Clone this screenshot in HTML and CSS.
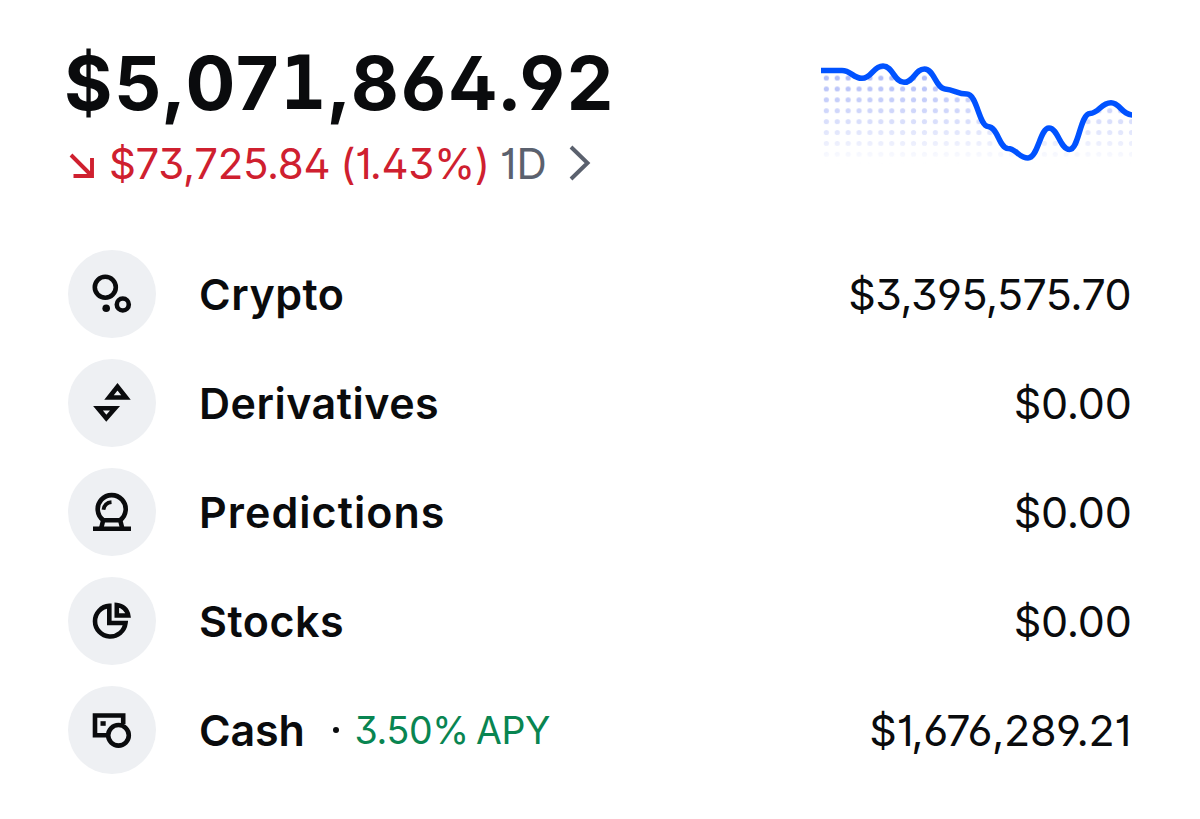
FILE: index.html
```html
<!DOCTYPE html>
<html lang="en">
<head>
<meta charset="utf-8">
<title>Portfolio</title>
<link rel="stylesheet" href="styles.css">
</head>
<body>
<main class="portfolio">
  <header class="summary">
    <div class="totals">
      <div class="balance"><span>$5,07</span><span class="serif-one">1</span><span>,864.92</span></div>
      <div class="change">
        <svg class="arrow" width="26" height="26" viewBox="0 0 26 26"><path d="M2 2L22 22M4.5 23H23V5" /></svg>
        <span class="loss">$73,725.84 (1.43%)</span>
        <span class="period">1D</span>
        <svg class="chevron" width="22" height="36" viewBox="0 0 22 36"><path d="M2 2L18.5 18L2 34" /></svg>
      </div>
    </div>
    <svg class="chart" width="311" height="110" viewBox="821 55 311 110">
      <defs>
        <pattern id="dots" x="820.9" y="72.6" width="10.9" height="10.9" patternUnits="userSpaceOnUse"><circle cx="5.45" cy="5.45" r="2.6" /></pattern>
        <linearGradient id="fade" x1="0" y1="80" x2="0" y2="164" gradientUnits="userSpaceOnUse"><stop offset="0" stop-color="#fff" /><stop offset="1" stop-color="#fff" stop-opacity="0" /></linearGradient>
        <mask id="fademask"><rect x="821" y="55" width="311" height="110" fill="url(#fade)" /></mask>
      </defs>
      <g mask="url(#fademask)"><path class="area" d="M821 70.5H842C851 70.5 853 78.3 862 78.3C872 78.3 873 66 883 66C893 66 894 82.3 904 82.3C914 82.3 915 69 924.500 69C934 69 936 88.500 945 89C955 90 957 94 967 94C977 94 979 126 988 126.500C998 127 999 148 1008 148.500C1016 148.500 1019 158 1028 158C1038 158 1040 128 1049 128C1058 128 1060 149.500 1069.500 149.500C1079 149.500 1080 114 1090 113.500C1099 113 1101 102.800 1111 102.800C1120 102.800 1122 115 1132 115V165H821Z" /></g>
      <path class="line" d="M820 70.5H842C851 70.5 853 78.3 862 78.3C872 78.3 873 66 883 66C893 66 894 82.3 904 82.3C914 82.3 915 69 924.500 69C934 69 936 88.500 945 89C955 90 957 94 967 94C977 94 979 126 988 126.500C998 127 999 148 1008 148.500C1016 148.500 1019 158 1028 158C1038 158 1040 128 1049 128C1058 128 1060 149.500 1069.500 149.500C1079 149.500 1080 114 1090 113.500C1099 113 1101 102.800 1111 102.800C1120 102.800 1122 115 1133 115" />
    </svg>
  </header>
  <ul class="assets">
    <li class="asset">
      <span class="badge"><svg class="icon" width="88" height="88" viewBox="0 0 88 88"><circle cx="37.300" cy="37.300" r="10.500" /><circle cx="54.800" cy="54.500" r="6" /><circle class="solid" cx="38.200" cy="58.200" r="3.800" /></svg></span>
      <span class="name crypto">Crypto</span><span class="value long">$3,395,575.70</span>
    </li>
    <li class="asset">
      <span class="badge"><svg class="icon" width="88" height="88" viewBox="0 0 88 88"><path d="M49.500 27.800L58 38.500H41ZM30 49.200H47L38.300 59.200Z" /></svg></span>
      <span class="name derivatives">Derivatives</span><span class="value short">$0.00</span>
    </li>
    <li class="asset">
      <span class="badge"><svg class="icon" width="88" height="88" viewBox="0 0 88 88"><path d="M35.200 52.200A14 14 0 1 1 52.200 52.200ZM35 53L33 61M52.400 53L54.400 61" /><path d="M25 60.800H63" /><path class="fine" d="M35.500 41.800Q36.500 34.600 43.500 34.100" /></svg></span>
      <span class="name predictions">Predictions</span><span class="value short">$0.00</span>
    </li>
    <li class="asset">
      <span class="badge"><svg class="icon" width="88" height="88" viewBox="0 0 88 88"><path d="M41.300 28.900A15.300 15.300 0 1 0 57.500 46H41.300Z" /><path d="M48.800 28V38.500H60.200A12.500 12.500 0 0 0 48.800 28Z" /></svg></span>
      <span class="name stocks">Stocks</span><span class="value short">$0.00</span>
    </li>
    <li class="asset">
      <span class="badge"><svg class="icon" width="88" height="88" viewBox="0 0 88 88"><path d="M39 49.200H27V29.500H55.200V38" /><path class="solid" d="M32.500 35.200h5.200v4.600h-5.200z" /><circle cx="50.500" cy="49.300" r="10.300" /></svg></span>
      <span class="name cash">Cash</span><span class="separator"></span><span class="apy">3.50% APY</span><span class="value cash-value">$1,676,289.21</span>
    </li>
  </ul>
</main>
</body>
</html>
```
FILE: styles.css
```css
* { box-sizing: border-box; }
body {
  margin: 0;
  background: #fff;
  color: #0a0b0d;
  font-family: Inter, "Liberation Sans", sans-serif;
  font-feature-settings: "ss01", "cv01", "cv09", "calt" 0;
}
svg { display: block; flex: none; fill: none; }
.portfolio { width: 1200px; height: 819px; padding: 38px 68px 0; }
.summary { display: flex; justify-content: space-between; height: 201px; }
.balance {
  display: flex;
  height: 90px;
  line-height: 90px;
  margin-left: -4px;
  font-size: 74px;
  font-weight: 650;
  letter-spacing: 1.65px;
  white-space: pre;
}
.serif-one { font-family: "DejaVu Sans Mono", monospace; font-weight: 700; }
.change { display: flex; align-items: center; height: 70px; font-size: 42px; white-space: pre; }
.arrow { margin: 6px 14px 0 1px; stroke: #cf202f; stroke-width: 3.9; }
.loss { color: #cf202f; letter-spacing: -0.35px; word-spacing: -1.5px; }
.period { margin-left: 10px; color: #5b616e; }
.chevron { margin-left: 22px; stroke: #5b616e; stroke-width: 4; }
.chart { margin-top: 17px; }
.area { fill: url(#dots); }
#dots circle { fill: #b4bff8; }
.line { stroke: #0052ff; stroke-width: 5.6; }
.assets { list-style: none; margin: 0; padding: 0; }
.asset { display: flex; align-items: center; height: 109px; font-size: 43px; line-height: 60px; white-space: pre; }
.badge { width: 88px; height: 88px; border-radius: 50%; background: #eef0f3; }
.icon { stroke: #0a0b0d; stroke-width: 4.6; }
.icon .solid { fill: #0a0b0d; stroke: none; }
.icon .fine { stroke-width: 3.8; }
.name { margin-left: 43px; font-weight: 620; letter-spacing: 0.5px; }
.predictions { letter-spacing: 1.05px; }
.cash { letter-spacing: -0.2px; }
.separator { width: 6px; height: 6px; margin: 1px 16px 0 28px; border-radius: 50%; background: #0a0b0d; }
.apy { margin-top: 2px; color: #098551; font-size: 37.5px; letter-spacing: -0.35px; word-spacing: -3px; }
.value { margin-left: auto; letter-spacing: -0.3px; }
.short { margin-right: 0.5px; }
.long { margin-right: 1px; letter-spacing: -0.6px; }
.cash-value { margin-right: 1px; letter-spacing: -0.4px; }
```
